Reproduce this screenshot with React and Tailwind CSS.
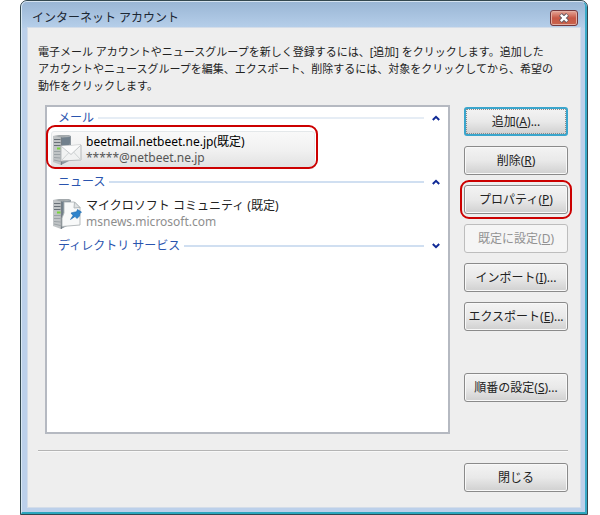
const buttonBase =
  'relative flex items-center justify-center w-full h-[29px] rounded-[3px] border text-xs whitespace-nowrap';
const buttonNormal =
  'border-[#8a8a8a] text-[#222] bg-linear-to-b from-[#f3f3f3] from-0% via-[#e9e9e9] via-50% to-[#d0d0d0] to-100% shadow-[inset_0_0_0_1px_#f8f8f8]';
const buttonFocused =
  'border-2 border-[#3aa5cc] text-[#222] bg-linear-to-b from-[#f3f3f3] from-0% via-[#e9e9e9] via-50% to-[#d0d0d0] to-100%';
const buttonDisabled = 'border-[#bdbdbd] text-[#929292] bg-[#f5f5f5]';

function DialogButton({ label, accessKey, suffix = '', focused, disabled, marked }) {
  const look = disabled ? buttonDisabled : focused ? buttonFocused : buttonNormal;
  return (
    <button type="button" disabled={disabled} className={`${buttonBase} ${look}`}>
      <span>
        {label}
        {accessKey && (
          <>
            (<u className="underline-offset-1">{accessKey}</u>)
          </>
        )}
        {suffix}
      </span>
      {focused && (
        <span className="absolute inset-0 rounded-[1px] border border-dotted border-[#8c8c8c]" />
      )}
      {marked && <span className="absolute -inset-x-[5px] -inset-y-1.5 rounded-[9px] border-2 border-[#cc0000]" />}
    </button>
  );
}

function GroupHeader({ title, open, faint }) {
  return (
    <div className="flex items-center h-5 pl-[11px] pr-2 text-xs text-[#2a54ae]">
      <h2>{title}</h2>
      <span className={`flex-1 h-0.5 ml-1 mr-2 ${faint ? 'bg-[#e6edf5]' : 'bg-[#d0dff1]'}`} />
      <button type="button" aria-label={title} aria-expanded={open} className="w-2">
        <svg viewBox="0 0 8 6" className="w-2 h-1.5" fill="none" stroke="#102a96" strokeWidth="2">
          <path d={open ? 'M0.8 5L4 1.8L7.2 5' : 'M0.8 1L4 4.2L7.2 1'} />
        </svg>
      </button>
    </div>
  );
}

/* サーバー本体 (共通) */
function Tower() {
  return (
    <>
      <path d="M9 3L19 2V26L9 31Z" fill="#8b959d" />
      <path d="M10 4L18 3V9L10 21Z" fill="#71808c" />
      <path d="M1 2L9 3V31L1 28Z" fill="#c0c4c6" />
      <path d="M1 2L7 1H17L19 2L9 3.5Z" fill="#a3a9ac" />
      <path d="M2 5.5H8.5M2 8.5H8.5M2 11.5H8.5" stroke="#687077" strokeWidth="1.2" />
      <path d="M2 17.5H8.5M2 20.5H8.5M2 23.5L8.5 24M2 26L8.5 27.5" stroke="#9ba2a6" strokeWidth="1" />
      <rect x="5" y="13.5" width="3.5" height="2" fill="#77d63b" />
      <path d="M9.3 3.5V31" stroke="#6a7379" strokeWidth="0.8" />
    </>
  );
}

function MailIcon() {
  return (
    <svg viewBox="0 0 30 32" className="w-[30px] h-8 shrink-0">
      <Tower />
      <path d="M9 12L29 11V26L9 27Z" fill="#f1f2f2" stroke="#b4b8ba" />
      <path d="M9 12L19 20.5L29 11" fill="#fbfbfb" stroke="#c3c7c9" />
      <path d="M9 27L16.5 19M29 26L21.5 18" stroke="#cfd3d4" />
    </svg>
  );
}

function NewsIcon() {
  return (
    <svg viewBox="0 0 30 32" className="w-[30px] h-8 shrink-0">
      <Tower />
      <path d="M12 4H22.5L28 9.5V27L10 28.5V20L12 15Z" fill="#f8f9f9" stroke="#aeb3b6" strokeWidth="0.9" />
      <path d="M22.5 4L22 10L28 9.5Z" fill="#dfe2e4" stroke="#aeb3b6" strokeWidth="0.9" />
      <path d="M25.5 11.5L29.5 14L28 15.5L27.5 18L25 20.5L23 18.5L18.5 21.5L21 17.5L19 15L22 14.2L24.5 13.8Z" fill="#2f84cc" stroke="#1c66ab" strokeWidth="0.6" />
    </svg>
  );
}

function Account({ icon, name, detail, selected, nameClass, detailClass }) {
  return (
    <div className="relative my-[3px] ml-1 w-[264px]">
      <div
        className={`flex items-center gap-1 h-[38px] rounded-[3px] border ${
          selected
            ? 'border-[#e4e8ea] bg-linear-to-b from-[#f9f9f9] via-[#f1f1f1] to-[#e1e1e1]'
            : 'border-transparent'
        }`}
      >
        {icon}
        <div className="whitespace-nowrap">
          <p className={`text-xs leading-4 ${nameClass}`}>{name}</p>
          <p className={`text-xs leading-4 ${detailClass}`}>{detail}</p>
        </div>
      </div>
      {selected && (
        <span className="absolute -top-1.5 bottom-0 -left-[5px] -right-[3px] rounded-[9px] border-2 border-[#cc0000]" />
      )}
    </div>
  );
}

export default function App() {
  return (
    <div className="pl-5 pr-3 bg-white font-['Noto_Sans','Noto_Sans_CJK_JP',sans-serif]">
      <div className="rounded-t-[7px] border border-[#33474f] bg-[#bcd0ea] overflow-hidden">
        <div className="border-t border-l border-r-2 border-b-2 border-t-[#d5e3f0] border-l-[#d9e9f4] border-r-[#38aac8] border-b-[#2ba6bd] rounded-t-[6px] overflow-hidden">
          {/* タイトルバー */}
          <header className="flex items-center justify-between h-[26px] pt-1.5 pl-2.5 pr-[7px] bg-linear-to-b from-[#9ab6d5] to-[#b6cfea]">
            <h1 className="text-xs leading-4 text-[#1c2733]">インターネット アカウント</h1>
            <button
              type="button"
              aria-label="閉じる"
              className="flex items-center justify-center w-7 h-4 rounded-[3px] border border-[#74383d] bg-linear-to-b from-[#e5a698] from-0% via-[#c75846] via-50% to-[#c9634c] to-100% shadow-[inset_0_0_0_1px_#e3aea2]"
            >
              <svg viewBox="0 0 12 10" className="w-3 h-2.5" fill="none">
                <path d="M2.5 1.5L9.5 8.5M9.5 1.5L2.5 8.5" stroke="#5b5560" strokeWidth="4.2" />
                <path d="M2.8 1.8L9.2 8.2M9.2 1.8L2.8 8.2" stroke="#fff" strokeWidth="2.4" />
              </svg>
            </button>
          </header>

          <main className="ml-1.5 mr-[5px] mb-[5px] pt-[15px] pb-[15px] pl-2.5 pr-3 bg-[#eeeeee] shadow-[0_0_0_1px_#d4dde9]">
            <p className="text-[11px] leading-[17px] text-[#222] whitespace-nowrap">
              電子メール アカウントやニュースグループを新しく登録するには、[追加] をクリックします。追加した
              <br />
              アカウントやニュースグループを編集、エクスポート、削除するには、対象をクリックしてから、希望の
              <br />
              動作をクリックします。
            </p>

            <div className="flex gap-[14px] mt-[11px] pl-[7px]">
              {/* アカウント一覧 */}
              <section className="flex-1 h-[329px] pt-px bg-white border-2 border-[#b5b9c1]">
                <GroupHeader title="メール" open faint />
                <Account
                  selected
                  icon={<MailIcon />}
                  name="beetmail.netbeet.ne.jp(既定)"
                  detail="*****@netbeet.ne.jp"
                  nameClass="text-black"
                  detailClass="text-[#555]"
                />
                <GroupHeader title="ニュース" open />
                <Account
                  icon={<NewsIcon />}
                  name="マイクロソフト コミュニティ (既定)"
                  detail="msnews.microsoft.com"
                  nameClass="text-[#222]"
                  detailClass="text-[#8e8e8e]"
                />
                <GroupHeader title="ディレクトリ サービス" open={false} />
              </section>

              <div className="flex flex-col gap-2.5 w-[104px] pt-0.5">
                <DialogButton label="追加" accessKey="A" suffix="..." focused />
                <DialogButton label="削除" accessKey="R" />
                <DialogButton label="プロパティ" accessKey="P" marked />
                <DialogButton label="既定に設定" accessKey="D" disabled />
                <DialogButton label="インポート" accessKey="I" suffix="..." />
                <DialogButton label="エクスポート" accessKey="E" suffix="..." />
                <div className="mt-8">
                  <DialogButton label="順番の設定" accessKey="S" suffix="..." />
                </div>
              </div>
            </div>

            <hr className="mt-4 h-0.5 border-t border-b border-t-[#b4b4b4] border-b-[#f8f8f8]" />

            <div className="flex justify-end mt-[11px]">
              <div className="w-[104px]">
                <DialogButton label="閉じる" />
              </div>
            </div>
          </main>
        </div>
      </div>
    </div>
  );
}
